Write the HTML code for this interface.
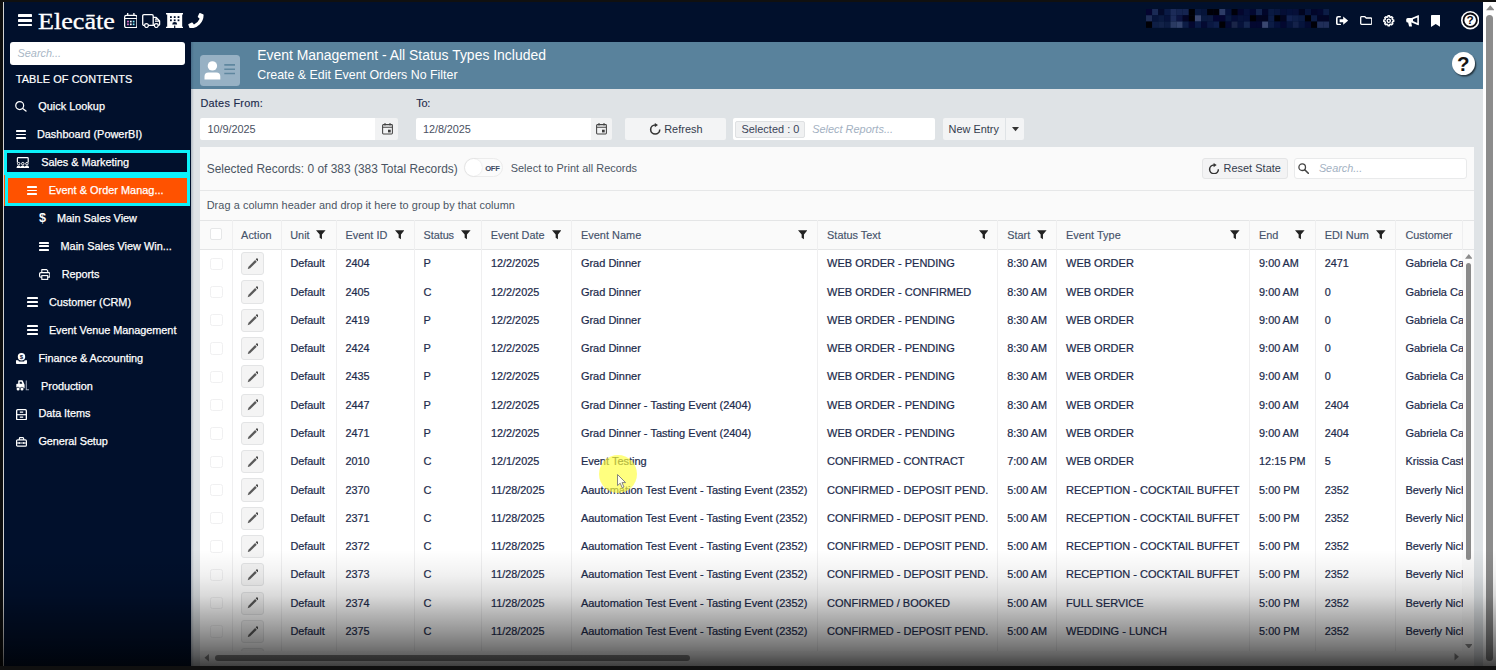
<!DOCTYPE html>
<html lang="en"><head><meta charset="utf-8"><title>Elecate - Event Management</title><style>
html,body{margin:0;padding:0;background:#0e0e0e;}
body{width:1496px;height:670px;overflow:hidden;position:relative;font-family:"Liberation Sans",sans-serif;}
.a{position:absolute;display:block;}
.t{white-space:nowrap;}
</style></head><body>
<div class="a " style="left:0.00px;top:0.00px;width:1496.00px;height:670.00px;background:#0e0e0e;"></div>
<div class="a " style="left:2.80px;top:1.80px;width:1481.20px;height:664.20px;background:#01102c;"></div>
<div class="a " style="left:2.80px;top:1.80px;width:1.30px;height:664.20px;background:#d4d4d4;"></div>
<div class="a " style="left:191.00px;top:42.40px;width:1293.00px;height:624.00px;background:#dfe3e6;"></div>
<div class="a " style="left:191.00px;top:42.40px;width:1293.00px;height:46.20px;background:#59829c;"></div>
<div class="a " style="left:191.00px;top:42.40px;width:3.00px;height:624.00px;background:linear-gradient(to right,rgba(20,40,70,.22),rgba(20,40,70,0));"></div>
<div class="a " style="left:1483.40px;top:2.00px;width:12.60px;height:664.00px;background:#ffffff;"></div>
<div class="a " style="left:1486.40px;top:15.00px;width:7.00px;height:646.00px;background:#8c8c8c;border-radius:3.5px;"></div>
<svg class="a" style="left:1485.60px;top:5.00px;" width="8.60" height="5.50" viewBox="0 0 10 6"><path d="M5 0L10 6H0z" fill="#8c8c8c"/></svg>
<div class="a " style="left:18.30px;top:14.30px;width:13.60px;height:2.30px;background:#fff;border-radius:0.4px;"></div>
<div class="a " style="left:18.30px;top:19.25px;width:13.60px;height:2.30px;background:#fff;border-radius:0.4px;"></div>
<div class="a " style="left:18.30px;top:24.20px;width:13.60px;height:2.30px;background:#fff;border-radius:0.4px;"></div>
<span class="a t" style="left:37.70px;top:8.20px;font-size:23.00px;line-height:28px;color:#fff;transform:scaleX(1.1365);transform-origin:0 50%;font-family:'Liberation Serif',serif;-webkit-text-stroke:0.3px #fff;">Elecāte</span>
<div class="a " style="left:10.00px;top:42.30px;width:175.00px;height:22.60px;background:#fff;border-radius:3px;"></div>
<span class="a t" style="left:17.50px;top:46.30px;font-size:10.90px;line-height:15px;color:#a9b7c6;font-style:italic;">Search...</span>
<span class="a t" style="left:15.80px;top:72.00px;font-size:10.90px;line-height:15px;color:#fff;letter-spacing:0.108px;-webkit-text-stroke:0.2px #fff;">TABLE OF CONTENTS</span>
<div class="a " style="left:4.20px;top:150.30px;width:186.20px;height:25.00px;border:3.2px solid #0cf2fa;box-sizing:border-box;"></div>
<div class="a " style="left:4.20px;top:175.30px;width:186.20px;height:30.40px;background:#ff5200;"></div>
<div class="a " style="left:5.30px;top:175.30px;width:185.10px;height:30.40px;border:3.2px solid #0cf2fa;box-sizing:border-box;"></div>
<span class="a t" style="left:38.30px;top:99.40px;font-size:10.90px;line-height:15px;color:#fff;letter-spacing:0.004px;-webkit-text-stroke:0.25px #fff;">Quick Lookup</span>
<span class="a t" style="left:36.90px;top:127.30px;font-size:10.90px;line-height:15px;color:#fff;letter-spacing:0.026px;-webkit-text-stroke:0.25px #fff;">Dashboard (PowerBI)</span>
<span class="a t" style="left:41.20px;top:155.20px;font-size:10.90px;line-height:15px;color:#fff;letter-spacing:-0.038px;-webkit-text-stroke:0.25px #fff;">Sales &amp; Marketing</span>
<span class="a t" style="left:48.70px;top:183.00px;font-size:10.90px;line-height:15px;color:#fff;letter-spacing:0.022px;-webkit-text-stroke:0.25px #fff;">Event &amp; Order Manag...</span>
<span class="a t" style="left:57.00px;top:210.80px;font-size:10.90px;line-height:15px;color:#fff;letter-spacing:-0.025px;-webkit-text-stroke:0.25px #fff;">Main Sales View</span>
<span class="a t" style="left:60.50px;top:238.80px;font-size:10.90px;line-height:15px;color:#fff;letter-spacing:0.006px;-webkit-text-stroke:0.25px #fff;">Main Sales View Win...</span>
<span class="a t" style="left:61.70px;top:266.70px;font-size:10.90px;line-height:15px;color:#fff;letter-spacing:-0.081px;-webkit-text-stroke:0.25px #fff;">Reports</span>
<span class="a t" style="left:48.90px;top:294.60px;font-size:10.90px;line-height:15px;color:#fff;letter-spacing:-0.011px;-webkit-text-stroke:0.25px #fff;">Customer (CRM)</span>
<span class="a t" style="left:48.90px;top:322.60px;font-size:10.90px;line-height:15px;color:#fff;letter-spacing:-0.040px;-webkit-text-stroke:0.25px #fff;">Event Venue Management</span>
<span class="a t" style="left:38.40px;top:350.50px;font-size:10.90px;line-height:15px;color:#fff;letter-spacing:-0.032px;-webkit-text-stroke:0.25px #fff;">Finance &amp; Accounting</span>
<span class="a t" style="left:41.10px;top:378.50px;font-size:10.90px;line-height:15px;color:#fff;letter-spacing:-0.051px;-webkit-text-stroke:0.25px #fff;">Production</span>
<span class="a t" style="left:38.40px;top:406.40px;font-size:10.90px;line-height:15px;color:#fff;letter-spacing:-0.070px;-webkit-text-stroke:0.25px #fff;">Data Items</span>
<span class="a t" style="left:38.40px;top:434.30px;font-size:10.90px;line-height:15px;color:#fff;letter-spacing:-0.061px;-webkit-text-stroke:0.25px #fff;">General Setup</span>
<div class="a " style="left:199.90px;top:54.60px;width:39.70px;height:31.50px;background:#97b1c4;border-radius:3.5px;"></div>
<span class="a t" style="left:257.20px;top:46.00px;font-size:13.95px;line-height:18px;color:#fff;letter-spacing:0.000px;">Event Management - All Status Types Included</span>
<span class="a t" style="left:257.20px;top:67.10px;font-size:12.40px;line-height:16px;color:#fff;letter-spacing:-0.001px;">Create &amp; Edit Event Orders No Filter</span>
<div class="a " style="left:1451.70px;top:52.40px;width:23.10px;height:23.10px;background:#fff;border-radius:50%;box-shadow:1.2px 1.6px 1.5px rgba(0,0,0,.6);"></div>
<span class="a t" style="left:1457.04px;top:52.20px;font-size:20.50px;line-height:24px;color:#141414;font-weight:700;">?</span>
<span class="a t" style="left:200.40px;top:95.80px;font-size:10.90px;line-height:15px;color:#1d2b4c;letter-spacing:0.258px;-webkit-text-stroke:0.15px #1d2b4c;">Dates From:</span>
<span class="a t" style="left:416.20px;top:95.80px;font-size:10.90px;line-height:15px;color:#1d2b4c;letter-spacing:-0.180px;-webkit-text-stroke:0.15px #1d2b4c;">To:</span>
<div class="a " style="left:200.40px;top:118.30px;width:174.50px;height:21.90px;background:#fff;border-radius:2px 0 0 2px;"></div>
<div class="a " style="left:374.90px;top:118.30px;width:23.10px;height:21.90px;background:#f1f2f3;border-radius:0 2px 2px 0;"></div>
<span class="a t" style="left:207.50px;top:121.90px;font-size:10.90px;line-height:15px;color:#4a5162;letter-spacing:-0.044px;">10/9/2025</span>
<div class="a " style="left:416.40px;top:118.30px;width:174.50px;height:21.90px;background:#fff;border-radius:2px 0 0 2px;"></div>
<div class="a " style="left:590.90px;top:118.30px;width:21.30px;height:21.90px;background:#f1f2f3;border-radius:0 2px 2px 0;"></div>
<span class="a t" style="left:423.00px;top:121.90px;font-size:10.90px;line-height:15px;color:#4a5162;letter-spacing:-0.088px;">12/8/2025</span>
<div class="a " style="left:625.30px;top:118.30px;width:101.00px;height:21.90px;background:#f3f4f5;border-radius:2px;"></div>
<span class="a t" style="left:664.20px;top:122.10px;font-size:10.90px;line-height:15px;color:#333c4d;letter-spacing:0.033px;">Refresh</span>
<div class="a " style="left:733.00px;top:118.30px;width:202.20px;height:21.90px;background:#fff;border-radius:2px;"></div>
<div class="a " style="left:735.40px;top:120.60px;width:69.50px;height:17.00px;background:#f0f1f2;border:1px solid #dfe1e3;box-sizing:border-box;border-radius:2px;"></div>
<span class="a t" style="left:741.40px;top:121.50px;font-size:10.90px;line-height:15px;color:#3a4458;letter-spacing:0.044px;">Selected : 0</span>
<span class="a t" style="left:812.20px;top:122.10px;font-size:10.90px;line-height:15px;color:#a3b1c2;letter-spacing:0.019px;font-style:italic;">Select Reports...</span>
<div class="a " style="left:942.90px;top:118.30px;width:81.60px;height:21.90px;background:#f3f4f5;border-radius:2px;"></div>
<div class="a " style="left:1005.20px;top:118.30px;width:0.80px;height:21.90px;background:#dfe3e6;"></div>
<span class="a t" style="left:948.60px;top:122.10px;font-size:10.90px;line-height:15px;color:#333c4d;letter-spacing:0.014px;">New Entry</span>
<svg class="a" style="left:1011.60px;top:127.20px;" width="7.00" height="4.40" viewBox="0 0 10 6"><path d="M0 0H10L5 6z" fill="#333"/></svg>
<div class="a " style="left:200.40px;top:146.70px;width:1273.90px;height:519.30px;background:#fafafa;"></div>
<span class="a t" style="left:206.70px;top:161.30px;font-size:11.90px;line-height:16px;color:#4a5563;letter-spacing:0.018px;">Selected Records: 0 of 383 (383 Total Records)</span>
<div class="a " style="left:464.20px;top:158.30px;width:39.10px;height:19.20px;background:#fbfbfb;border:1px solid #ececec;box-sizing:border-box;border-radius:10px;"></div>
<div class="a " style="left:465.20px;top:159.30px;width:17.20px;height:17.20px;background:#fff;border-radius:50%;box-shadow:0 0 2px rgba(0,0,0,.13);"></div>
<span class="a t" style="left:485.20px;top:163.60px;font-size:7.60px;line-height:10px;color:#3c4a63;letter-spacing:-0.232px;font-weight:700;">OFF</span>
<span class="a t" style="left:510.70px;top:160.90px;font-size:10.90px;line-height:15px;color:#4a5563;letter-spacing:0.041px;">Select to Print all Records</span>
<div class="a " style="left:1201.50px;top:157.70px;width:86.10px;height:21.70px;background:#f3f3f4;border:1px solid #e4e5e6;box-sizing:border-box;border-radius:3px;"></div>
<span class="a t" style="left:1223.50px;top:161.10px;font-size:10.90px;line-height:15px;color:#333c4d;letter-spacing:0.050px;">Reset State</span>
<div class="a " style="left:1293.60px;top:157.70px;width:173.80px;height:21.70px;background:#fff;border:1px solid #e9eaeb;box-sizing:border-box;border-radius:3px;"></div>
<span class="a t" style="left:1318.90px;top:161.10px;font-size:10.90px;line-height:15px;color:#a3b1c2;letter-spacing:-0.036px;font-style:italic;">Search...</span>
<div class="a " style="left:200.40px;top:190.00px;width:1273.90px;height:1.00px;background:#e6e7e8;"></div>
<span class="a t" style="left:206.70px;top:197.90px;font-size:10.90px;line-height:15px;color:#4a5563;letter-spacing:0.071px;">Drag a column header and drop it here to group by that column</span>
<div class="a " style="left:200.40px;top:220.00px;width:1273.90px;height:1.00px;background:#e4e5e6;"></div>
<div class="a " style="left:200.40px;top:221.00px;width:1273.90px;height:28.20px;background:#fafafa;"></div>
<div class="a " style="left:200.40px;top:249.00px;width:1273.90px;height:1.00px;background:#e4e5e6;"></div>
<div class="a " style="left:200.40px;top:250.00px;width:1262.00px;height:416.00px;background:#fff;"></div>
<div class="a " style="left:231.60px;top:220.00px;width:1.00px;height:431.00px;background:#efeff0;"></div>
<div class="a " style="left:281.10px;top:220.00px;width:1.00px;height:431.00px;background:#efeff0;"></div>
<div class="a " style="left:335.90px;top:220.00px;width:1.00px;height:431.00px;background:#efeff0;"></div>
<div class="a " style="left:414.10px;top:220.00px;width:1.00px;height:431.00px;background:#efeff0;"></div>
<div class="a " style="left:480.70px;top:220.00px;width:1.00px;height:431.00px;background:#efeff0;"></div>
<div class="a " style="left:570.90px;top:220.00px;width:1.00px;height:431.00px;background:#efeff0;"></div>
<div class="a " style="left:817.00px;top:220.00px;width:1.00px;height:431.00px;background:#efeff0;"></div>
<div class="a " style="left:996.70px;top:220.00px;width:1.00px;height:431.00px;background:#efeff0;"></div>
<div class="a " style="left:1055.90px;top:220.00px;width:1.00px;height:431.00px;background:#efeff0;"></div>
<div class="a " style="left:1249.40px;top:220.00px;width:1.00px;height:431.00px;background:#efeff0;"></div>
<div class="a " style="left:1315.30px;top:220.00px;width:1.00px;height:431.00px;background:#efeff0;"></div>
<div class="a " style="left:1395.10px;top:220.00px;width:1.00px;height:431.00px;background:#efeff0;"></div>
<div class="a " style="left:1461.90px;top:220.00px;width:1.00px;height:29.50px;background:#efeff0;"></div>
<span class="a t" style="left:241.10px;top:227.70px;font-size:10.90px;line-height:15px;color:#46536b;letter-spacing:0.034px;-webkit-text-stroke:0.15px #46536b;">Action</span>
<span class="a t" style="left:290.20px;top:227.70px;font-size:10.90px;line-height:15px;color:#46536b;letter-spacing:0.029px;-webkit-text-stroke:0.15px #46536b;">Unit</span>
<svg class="a" style="left:316.30px;top:230.40px;" width="9.60" height="9.90" viewBox="0 0 10 10"><path d="M0 0H10L6.2 4.6V9.6L3.8 8V4.6z" fill="#222"/></svg>
<span class="a t" style="left:345.40px;top:227.70px;font-size:10.90px;line-height:15px;color:#46536b;letter-spacing:0.037px;-webkit-text-stroke:0.15px #46536b;">Event ID</span>
<svg class="a" style="left:394.50px;top:230.40px;" width="9.60" height="9.90" viewBox="0 0 10 10"><path d="M0 0H10L6.2 4.6V9.6L3.8 8V4.6z" fill="#222"/></svg>
<span class="a t" style="left:423.60px;top:227.70px;font-size:10.90px;line-height:15px;color:#46536b;letter-spacing:-0.084px;-webkit-text-stroke:0.15px #46536b;">Status</span>
<svg class="a" style="left:461.00px;top:230.40px;" width="9.60" height="9.90" viewBox="0 0 10 10"><path d="M0 0H10L6.2 4.6V9.6L3.8 8V4.6z" fill="#222"/></svg>
<span class="a t" style="left:490.70px;top:227.70px;font-size:10.90px;line-height:15px;color:#46536b;letter-spacing:-0.003px;-webkit-text-stroke:0.15px #46536b;">Event Date</span>
<svg class="a" style="left:551.80px;top:230.40px;" width="9.60" height="9.90" viewBox="0 0 10 10"><path d="M0 0H10L6.2 4.6V9.6L3.8 8V4.6z" fill="#222"/></svg>
<span class="a t" style="left:580.90px;top:227.70px;font-size:10.90px;line-height:15px;color:#46536b;letter-spacing:0.052px;-webkit-text-stroke:0.15px #46536b;">Event Name</span>
<svg class="a" style="left:797.70px;top:230.40px;" width="9.60" height="9.90" viewBox="0 0 10 10"><path d="M0 0H10L6.2 4.6V9.6L3.8 8V4.6z" fill="#222"/></svg>
<span class="a t" style="left:827.10px;top:227.70px;font-size:10.90px;line-height:15px;color:#46536b;letter-spacing:0.007px;-webkit-text-stroke:0.15px #46536b;">Status Text</span>
<svg class="a" style="left:978.50px;top:230.40px;" width="9.60" height="9.90" viewBox="0 0 10 10"><path d="M0 0H10L6.2 4.6V9.6L3.8 8V4.6z" fill="#222"/></svg>
<span class="a t" style="left:1007.20px;top:227.70px;font-size:10.90px;line-height:15px;color:#46536b;letter-spacing:0.016px;-webkit-text-stroke:0.15px #46536b;">Start</span>
<svg class="a" style="left:1037.30px;top:230.40px;" width="9.60" height="9.90" viewBox="0 0 10 10"><path d="M0 0H10L6.2 4.6V9.6L3.8 8V4.6z" fill="#222"/></svg>
<span class="a t" style="left:1066.00px;top:227.70px;font-size:10.90px;line-height:15px;color:#46536b;letter-spacing:0.046px;-webkit-text-stroke:0.15px #46536b;">Event Type</span>
<svg class="a" style="left:1230.00px;top:230.40px;" width="9.60" height="9.90" viewBox="0 0 10 10"><path d="M0 0H10L6.2 4.6V9.6L3.8 8V4.6z" fill="#222"/></svg>
<span class="a t" style="left:1259.10px;top:227.70px;font-size:10.90px;line-height:15px;color:#46536b;letter-spacing:-0.098px;-webkit-text-stroke:0.15px #46536b;">End</span>
<svg class="a" style="left:1295.20px;top:230.40px;" width="9.60" height="9.90" viewBox="0 0 10 10"><path d="M0 0H10L6.2 4.6V9.6L3.8 8V4.6z" fill="#222"/></svg>
<span class="a t" style="left:1324.70px;top:227.70px;font-size:10.90px;line-height:15px;color:#46536b;letter-spacing:-0.002px;-webkit-text-stroke:0.15px #46536b;">EDI Num</span>
<svg class="a" style="left:1376.20px;top:230.40px;" width="9.60" height="9.90" viewBox="0 0 10 10"><path d="M0 0H10L6.2 4.6V9.6L3.8 8V4.6z" fill="#222"/></svg>
<span class="a t" style="left:1405.40px;top:227.70px;font-size:10.90px;line-height:15px;color:#46536b;letter-spacing:-0.031px;-webkit-text-stroke:0.15px #46536b;">Customer</span>
<div class="a " style="left:210.40px;top:228.40px;width:12.00px;height:12.00px;background:#fff;border:1px solid #e6e7e8;box-sizing:border-box;border-radius:2px;"></div>
<div class="a " style="left:210.20px;top:257.50px;width:12.40px;height:12.40px;background:#fff;border:1px solid #f0f0f1;box-sizing:border-box;border-radius:2.5px;"></div>
<div class="a " style="left:241.10px;top:252.20px;width:23.10px;height:23.10px;background:#f4f4f4;border:1px solid #e3e4e5;box-sizing:border-box;border-radius:3px;"></div>
<svg class="a" style="left:246.90px;top:257.80px;" width="11.60" height="11.60" viewBox="0 0 10 10"><path d="M0.600 9.600L1.300 7.500L7 1.800L8.400 3.200L2.700 8.900z" fill="#5a5a5a"/><path d="M7.500 1L8.100 0.400a0.700 0.700 0 0 1 1 0L9.800 1.100a0.700 0.700 0 0 1 0 1L9.200 2.700z" fill="#444"/></svg>
<span class="a t" style="left:290.40px;top:256.30px;font-size:10.90px;line-height:15px;color:#1d2b4c;letter-spacing:-0.020px;-webkit-text-stroke:0.22px #1d2b4c;">Default</span>
<span class="a t" style="left:345.40px;top:256.30px;font-size:10.85px;line-height:15px;color:#1d2b4c;-webkit-text-stroke:0.22px #1d2b4c;">2404</span>
<span class="a t" style="left:423.60px;top:256.30px;font-size:11.00px;line-height:15px;color:#1d2b4c;-webkit-text-stroke:0.22px #1d2b4c;">P</span>
<span class="a t" style="left:491.00px;top:256.30px;font-size:10.85px;line-height:15px;color:#1d2b4c;-webkit-text-stroke:0.22px #1d2b4c;">12/2/2025</span>
<span class="a t" style="left:580.90px;top:256.30px;font-size:11.00px;line-height:15px;color:#1d2b4c;-webkit-text-stroke:0.22px #1d2b4c;">Grad Dinner</span>
<span class="a t" style="left:827.10px;top:256.30px;font-size:11.00px;line-height:15px;color:#1d2b4c;-webkit-text-stroke:0.22px #1d2b4c;">WEB ORDER - PENDING</span>
<span class="a t" style="left:1007.20px;top:256.30px;font-size:10.85px;line-height:15px;color:#1d2b4c;-webkit-text-stroke:0.22px #1d2b4c;">8:30 AM</span>
<span class="a t" style="left:1066.00px;top:256.30px;font-size:11.00px;line-height:15px;color:#1d2b4c;-webkit-text-stroke:0.22px #1d2b4c;">WEB ORDER</span>
<span class="a t" style="left:1259.10px;top:256.30px;font-size:10.85px;line-height:15px;color:#1d2b4c;-webkit-text-stroke:0.22px #1d2b4c;">9:00 AM</span>
<span class="a t" style="left:1324.70px;top:256.30px;font-size:10.85px;line-height:15px;color:#1d2b4c;-webkit-text-stroke:0.22px #1d2b4c;">2471</span>
<span class="a t" style="left:1405.40px;top:256.30px;font-size:11.00px;line-height:15px;color:#1d2b4c;width:57.20px;overflow:hidden;-webkit-text-stroke:0.22px #1d2b4c;">Gabriela Cas</span>
<div class="a " style="left:210.20px;top:285.79px;width:12.40px;height:12.40px;background:#fff;border:1px solid #f0f0f1;box-sizing:border-box;border-radius:2.5px;"></div>
<div class="a " style="left:241.10px;top:280.49px;width:23.10px;height:23.10px;background:#f4f4f4;border:1px solid #e3e4e5;box-sizing:border-box;border-radius:3px;"></div>
<svg class="a" style="left:246.90px;top:286.09px;" width="11.60" height="11.60" viewBox="0 0 10 10"><path d="M0.600 9.600L1.300 7.500L7 1.800L8.400 3.200L2.700 8.900z" fill="#5a5a5a"/><path d="M7.500 1L8.100 0.400a0.700 0.700 0 0 1 1 0L9.800 1.100a0.700 0.700 0 0 1 0 1L9.200 2.700z" fill="#444"/></svg>
<span class="a t" style="left:290.40px;top:284.59px;font-size:10.90px;line-height:15px;color:#1d2b4c;letter-spacing:-0.020px;-webkit-text-stroke:0.22px #1d2b4c;">Default</span>
<span class="a t" style="left:345.40px;top:284.59px;font-size:10.85px;line-height:15px;color:#1d2b4c;-webkit-text-stroke:0.22px #1d2b4c;">2405</span>
<span class="a t" style="left:423.60px;top:284.59px;font-size:11.00px;line-height:15px;color:#1d2b4c;-webkit-text-stroke:0.22px #1d2b4c;">C</span>
<span class="a t" style="left:491.00px;top:284.59px;font-size:10.85px;line-height:15px;color:#1d2b4c;-webkit-text-stroke:0.22px #1d2b4c;">12/2/2025</span>
<span class="a t" style="left:580.90px;top:284.59px;font-size:11.00px;line-height:15px;color:#1d2b4c;-webkit-text-stroke:0.22px #1d2b4c;">Grad Dinner</span>
<span class="a t" style="left:827.10px;top:284.59px;font-size:11.00px;line-height:15px;color:#1d2b4c;-webkit-text-stroke:0.22px #1d2b4c;">WEB ORDER - CONFIRMED</span>
<span class="a t" style="left:1007.20px;top:284.59px;font-size:10.85px;line-height:15px;color:#1d2b4c;-webkit-text-stroke:0.22px #1d2b4c;">8:30 AM</span>
<span class="a t" style="left:1066.00px;top:284.59px;font-size:11.00px;line-height:15px;color:#1d2b4c;-webkit-text-stroke:0.22px #1d2b4c;">WEB ORDER</span>
<span class="a t" style="left:1259.10px;top:284.59px;font-size:10.85px;line-height:15px;color:#1d2b4c;-webkit-text-stroke:0.22px #1d2b4c;">9:00 AM</span>
<span class="a t" style="left:1324.70px;top:284.59px;font-size:10.85px;line-height:15px;color:#1d2b4c;-webkit-text-stroke:0.22px #1d2b4c;">0</span>
<span class="a t" style="left:1405.40px;top:284.59px;font-size:11.00px;line-height:15px;color:#1d2b4c;width:57.20px;overflow:hidden;-webkit-text-stroke:0.22px #1d2b4c;">Gabriela Cas</span>
<div class="a " style="left:210.20px;top:314.07px;width:12.40px;height:12.40px;background:#fff;border:1px solid #f0f0f1;box-sizing:border-box;border-radius:2.5px;"></div>
<div class="a " style="left:241.10px;top:308.77px;width:23.10px;height:23.10px;background:#f4f4f4;border:1px solid #e3e4e5;box-sizing:border-box;border-radius:3px;"></div>
<svg class="a" style="left:246.90px;top:314.37px;" width="11.60" height="11.60" viewBox="0 0 10 10"><path d="M0.600 9.600L1.300 7.500L7 1.800L8.400 3.200L2.700 8.900z" fill="#5a5a5a"/><path d="M7.500 1L8.100 0.400a0.700 0.700 0 0 1 1 0L9.800 1.100a0.700 0.700 0 0 1 0 1L9.200 2.700z" fill="#444"/></svg>
<span class="a t" style="left:290.40px;top:312.87px;font-size:10.90px;line-height:15px;color:#1d2b4c;letter-spacing:-0.020px;-webkit-text-stroke:0.22px #1d2b4c;">Default</span>
<span class="a t" style="left:345.40px;top:312.87px;font-size:10.85px;line-height:15px;color:#1d2b4c;-webkit-text-stroke:0.22px #1d2b4c;">2419</span>
<span class="a t" style="left:423.60px;top:312.87px;font-size:11.00px;line-height:15px;color:#1d2b4c;-webkit-text-stroke:0.22px #1d2b4c;">P</span>
<span class="a t" style="left:491.00px;top:312.87px;font-size:10.85px;line-height:15px;color:#1d2b4c;-webkit-text-stroke:0.22px #1d2b4c;">12/2/2025</span>
<span class="a t" style="left:580.90px;top:312.87px;font-size:11.00px;line-height:15px;color:#1d2b4c;-webkit-text-stroke:0.22px #1d2b4c;">Grad Dinner</span>
<span class="a t" style="left:827.10px;top:312.87px;font-size:11.00px;line-height:15px;color:#1d2b4c;-webkit-text-stroke:0.22px #1d2b4c;">WEB ORDER - PENDING</span>
<span class="a t" style="left:1007.20px;top:312.87px;font-size:10.85px;line-height:15px;color:#1d2b4c;-webkit-text-stroke:0.22px #1d2b4c;">8:30 AM</span>
<span class="a t" style="left:1066.00px;top:312.87px;font-size:11.00px;line-height:15px;color:#1d2b4c;-webkit-text-stroke:0.22px #1d2b4c;">WEB ORDER</span>
<span class="a t" style="left:1259.10px;top:312.87px;font-size:10.85px;line-height:15px;color:#1d2b4c;-webkit-text-stroke:0.22px #1d2b4c;">9:00 AM</span>
<span class="a t" style="left:1324.70px;top:312.87px;font-size:10.85px;line-height:15px;color:#1d2b4c;-webkit-text-stroke:0.22px #1d2b4c;">0</span>
<span class="a t" style="left:1405.40px;top:312.87px;font-size:11.00px;line-height:15px;color:#1d2b4c;width:57.20px;overflow:hidden;-webkit-text-stroke:0.22px #1d2b4c;">Gabriela Cas</span>
<div class="a " style="left:210.20px;top:342.36px;width:12.40px;height:12.40px;background:#fff;border:1px solid #f0f0f1;box-sizing:border-box;border-radius:2.5px;"></div>
<div class="a " style="left:241.10px;top:337.06px;width:23.10px;height:23.10px;background:#f4f4f4;border:1px solid #e3e4e5;box-sizing:border-box;border-radius:3px;"></div>
<svg class="a" style="left:246.90px;top:342.66px;" width="11.60" height="11.60" viewBox="0 0 10 10"><path d="M0.600 9.600L1.300 7.500L7 1.800L8.400 3.200L2.700 8.900z" fill="#5a5a5a"/><path d="M7.500 1L8.100 0.400a0.700 0.700 0 0 1 1 0L9.800 1.100a0.700 0.700 0 0 1 0 1L9.200 2.700z" fill="#444"/></svg>
<span class="a t" style="left:290.40px;top:341.16px;font-size:10.90px;line-height:15px;color:#1d2b4c;letter-spacing:-0.020px;-webkit-text-stroke:0.22px #1d2b4c;">Default</span>
<span class="a t" style="left:345.40px;top:341.16px;font-size:10.85px;line-height:15px;color:#1d2b4c;-webkit-text-stroke:0.22px #1d2b4c;">2424</span>
<span class="a t" style="left:423.60px;top:341.16px;font-size:11.00px;line-height:15px;color:#1d2b4c;-webkit-text-stroke:0.22px #1d2b4c;">P</span>
<span class="a t" style="left:491.00px;top:341.16px;font-size:10.85px;line-height:15px;color:#1d2b4c;-webkit-text-stroke:0.22px #1d2b4c;">12/2/2025</span>
<span class="a t" style="left:580.90px;top:341.16px;font-size:11.00px;line-height:15px;color:#1d2b4c;-webkit-text-stroke:0.22px #1d2b4c;">Grad Dinner</span>
<span class="a t" style="left:827.10px;top:341.16px;font-size:11.00px;line-height:15px;color:#1d2b4c;-webkit-text-stroke:0.22px #1d2b4c;">WEB ORDER - PENDING</span>
<span class="a t" style="left:1007.20px;top:341.16px;font-size:10.85px;line-height:15px;color:#1d2b4c;-webkit-text-stroke:0.22px #1d2b4c;">8:30 AM</span>
<span class="a t" style="left:1066.00px;top:341.16px;font-size:11.00px;line-height:15px;color:#1d2b4c;-webkit-text-stroke:0.22px #1d2b4c;">WEB ORDER</span>
<span class="a t" style="left:1259.10px;top:341.16px;font-size:10.85px;line-height:15px;color:#1d2b4c;-webkit-text-stroke:0.22px #1d2b4c;">9:00 AM</span>
<span class="a t" style="left:1324.70px;top:341.16px;font-size:10.85px;line-height:15px;color:#1d2b4c;-webkit-text-stroke:0.22px #1d2b4c;">0</span>
<span class="a t" style="left:1405.40px;top:341.16px;font-size:11.00px;line-height:15px;color:#1d2b4c;width:57.20px;overflow:hidden;-webkit-text-stroke:0.22px #1d2b4c;">Gabriela Cas</span>
<div class="a " style="left:210.20px;top:370.64px;width:12.40px;height:12.40px;background:#fff;border:1px solid #f0f0f1;box-sizing:border-box;border-radius:2.5px;"></div>
<div class="a " style="left:241.10px;top:365.34px;width:23.10px;height:23.10px;background:#f4f4f4;border:1px solid #e3e4e5;box-sizing:border-box;border-radius:3px;"></div>
<svg class="a" style="left:246.90px;top:370.94px;" width="11.60" height="11.60" viewBox="0 0 10 10"><path d="M0.600 9.600L1.300 7.500L7 1.800L8.400 3.200L2.700 8.900z" fill="#5a5a5a"/><path d="M7.500 1L8.100 0.400a0.700 0.700 0 0 1 1 0L9.800 1.100a0.700 0.700 0 0 1 0 1L9.200 2.700z" fill="#444"/></svg>
<span class="a t" style="left:290.40px;top:369.44px;font-size:10.90px;line-height:15px;color:#1d2b4c;letter-spacing:-0.020px;-webkit-text-stroke:0.22px #1d2b4c;">Default</span>
<span class="a t" style="left:345.40px;top:369.44px;font-size:10.85px;line-height:15px;color:#1d2b4c;-webkit-text-stroke:0.22px #1d2b4c;">2435</span>
<span class="a t" style="left:423.60px;top:369.44px;font-size:11.00px;line-height:15px;color:#1d2b4c;-webkit-text-stroke:0.22px #1d2b4c;">P</span>
<span class="a t" style="left:491.00px;top:369.44px;font-size:10.85px;line-height:15px;color:#1d2b4c;-webkit-text-stroke:0.22px #1d2b4c;">12/2/2025</span>
<span class="a t" style="left:580.90px;top:369.44px;font-size:11.00px;line-height:15px;color:#1d2b4c;-webkit-text-stroke:0.22px #1d2b4c;">Grad Dinner</span>
<span class="a t" style="left:827.10px;top:369.44px;font-size:11.00px;line-height:15px;color:#1d2b4c;-webkit-text-stroke:0.22px #1d2b4c;">WEB ORDER - PENDING</span>
<span class="a t" style="left:1007.20px;top:369.44px;font-size:10.85px;line-height:15px;color:#1d2b4c;-webkit-text-stroke:0.22px #1d2b4c;">8:30 AM</span>
<span class="a t" style="left:1066.00px;top:369.44px;font-size:11.00px;line-height:15px;color:#1d2b4c;-webkit-text-stroke:0.22px #1d2b4c;">WEB ORDER</span>
<span class="a t" style="left:1259.10px;top:369.44px;font-size:10.85px;line-height:15px;color:#1d2b4c;-webkit-text-stroke:0.22px #1d2b4c;">9:00 AM</span>
<span class="a t" style="left:1324.70px;top:369.44px;font-size:10.85px;line-height:15px;color:#1d2b4c;-webkit-text-stroke:0.22px #1d2b4c;">0</span>
<span class="a t" style="left:1405.40px;top:369.44px;font-size:11.00px;line-height:15px;color:#1d2b4c;width:57.20px;overflow:hidden;-webkit-text-stroke:0.22px #1d2b4c;">Gabriela Cas</span>
<div class="a " style="left:210.20px;top:398.93px;width:12.40px;height:12.40px;background:#fff;border:1px solid #f0f0f1;box-sizing:border-box;border-radius:2.5px;"></div>
<div class="a " style="left:241.10px;top:393.62px;width:23.10px;height:23.10px;background:#f4f4f4;border:1px solid #e3e4e5;box-sizing:border-box;border-radius:3px;"></div>
<svg class="a" style="left:246.90px;top:399.23px;" width="11.60" height="11.60" viewBox="0 0 10 10"><path d="M0.600 9.600L1.300 7.500L7 1.800L8.400 3.200L2.700 8.900z" fill="#5a5a5a"/><path d="M7.500 1L8.100 0.400a0.700 0.700 0 0 1 1 0L9.800 1.100a0.700 0.700 0 0 1 0 1L9.200 2.700z" fill="#444"/></svg>
<span class="a t" style="left:290.40px;top:397.73px;font-size:10.90px;line-height:15px;color:#1d2b4c;letter-spacing:-0.020px;-webkit-text-stroke:0.22px #1d2b4c;">Default</span>
<span class="a t" style="left:345.40px;top:397.73px;font-size:10.85px;line-height:15px;color:#1d2b4c;-webkit-text-stroke:0.22px #1d2b4c;">2447</span>
<span class="a t" style="left:423.60px;top:397.73px;font-size:11.00px;line-height:15px;color:#1d2b4c;-webkit-text-stroke:0.22px #1d2b4c;">P</span>
<span class="a t" style="left:491.00px;top:397.73px;font-size:10.85px;line-height:15px;color:#1d2b4c;-webkit-text-stroke:0.22px #1d2b4c;">12/2/2025</span>
<span class="a t" style="left:580.90px;top:397.73px;font-size:11.00px;line-height:15px;color:#1d2b4c;-webkit-text-stroke:0.22px #1d2b4c;">Grad Dinner - Tasting Event (2404)</span>
<span class="a t" style="left:827.10px;top:397.73px;font-size:11.00px;line-height:15px;color:#1d2b4c;-webkit-text-stroke:0.22px #1d2b4c;">WEB ORDER - PENDING</span>
<span class="a t" style="left:1007.20px;top:397.73px;font-size:10.85px;line-height:15px;color:#1d2b4c;-webkit-text-stroke:0.22px #1d2b4c;">8:30 AM</span>
<span class="a t" style="left:1066.00px;top:397.73px;font-size:11.00px;line-height:15px;color:#1d2b4c;-webkit-text-stroke:0.22px #1d2b4c;">WEB ORDER</span>
<span class="a t" style="left:1259.10px;top:397.73px;font-size:10.85px;line-height:15px;color:#1d2b4c;-webkit-text-stroke:0.22px #1d2b4c;">9:00 AM</span>
<span class="a t" style="left:1324.70px;top:397.73px;font-size:10.85px;line-height:15px;color:#1d2b4c;-webkit-text-stroke:0.22px #1d2b4c;">2404</span>
<span class="a t" style="left:1405.40px;top:397.73px;font-size:11.00px;line-height:15px;color:#1d2b4c;width:57.20px;overflow:hidden;-webkit-text-stroke:0.22px #1d2b4c;">Gabriela Cas</span>
<div class="a " style="left:210.20px;top:427.21px;width:12.40px;height:12.40px;background:#fff;border:1px solid #f0f0f1;box-sizing:border-box;border-radius:2.5px;"></div>
<div class="a " style="left:241.10px;top:421.91px;width:23.10px;height:23.10px;background:#f4f4f4;border:1px solid #e3e4e5;box-sizing:border-box;border-radius:3px;"></div>
<svg class="a" style="left:246.90px;top:427.51px;" width="11.60" height="11.60" viewBox="0 0 10 10"><path d="M0.600 9.600L1.300 7.500L7 1.800L8.400 3.200L2.700 8.900z" fill="#5a5a5a"/><path d="M7.500 1L8.100 0.400a0.700 0.700 0 0 1 1 0L9.800 1.100a0.700 0.700 0 0 1 0 1L9.200 2.700z" fill="#444"/></svg>
<span class="a t" style="left:290.40px;top:426.01px;font-size:10.90px;line-height:15px;color:#1d2b4c;letter-spacing:-0.020px;-webkit-text-stroke:0.22px #1d2b4c;">Default</span>
<span class="a t" style="left:345.40px;top:426.01px;font-size:10.85px;line-height:15px;color:#1d2b4c;-webkit-text-stroke:0.22px #1d2b4c;">2471</span>
<span class="a t" style="left:423.60px;top:426.01px;font-size:11.00px;line-height:15px;color:#1d2b4c;-webkit-text-stroke:0.22px #1d2b4c;">P</span>
<span class="a t" style="left:491.00px;top:426.01px;font-size:10.85px;line-height:15px;color:#1d2b4c;-webkit-text-stroke:0.22px #1d2b4c;">12/2/2025</span>
<span class="a t" style="left:580.90px;top:426.01px;font-size:11.00px;line-height:15px;color:#1d2b4c;-webkit-text-stroke:0.22px #1d2b4c;">Grad Dinner - Tasting Event (2404)</span>
<span class="a t" style="left:827.10px;top:426.01px;font-size:11.00px;line-height:15px;color:#1d2b4c;-webkit-text-stroke:0.22px #1d2b4c;">WEB ORDER - PENDING</span>
<span class="a t" style="left:1007.20px;top:426.01px;font-size:10.85px;line-height:15px;color:#1d2b4c;-webkit-text-stroke:0.22px #1d2b4c;">8:30 AM</span>
<span class="a t" style="left:1066.00px;top:426.01px;font-size:11.00px;line-height:15px;color:#1d2b4c;-webkit-text-stroke:0.22px #1d2b4c;">WEB ORDER</span>
<span class="a t" style="left:1259.10px;top:426.01px;font-size:10.85px;line-height:15px;color:#1d2b4c;-webkit-text-stroke:0.22px #1d2b4c;">9:00 AM</span>
<span class="a t" style="left:1324.70px;top:426.01px;font-size:10.85px;line-height:15px;color:#1d2b4c;-webkit-text-stroke:0.22px #1d2b4c;">2404</span>
<span class="a t" style="left:1405.40px;top:426.01px;font-size:11.00px;line-height:15px;color:#1d2b4c;width:57.20px;overflow:hidden;-webkit-text-stroke:0.22px #1d2b4c;">Gabriela Cas</span>
<div class="a " style="left:210.20px;top:455.50px;width:12.40px;height:12.40px;background:#fff;border:1px solid #f0f0f1;box-sizing:border-box;border-radius:2.5px;"></div>
<div class="a " style="left:241.10px;top:450.19px;width:23.10px;height:23.10px;background:#f4f4f4;border:1px solid #e3e4e5;box-sizing:border-box;border-radius:3px;"></div>
<svg class="a" style="left:246.90px;top:455.80px;" width="11.60" height="11.60" viewBox="0 0 10 10"><path d="M0.600 9.600L1.300 7.500L7 1.800L8.400 3.200L2.700 8.900z" fill="#5a5a5a"/><path d="M7.500 1L8.100 0.400a0.700 0.700 0 0 1 1 0L9.800 1.100a0.700 0.700 0 0 1 0 1L9.200 2.700z" fill="#444"/></svg>
<span class="a t" style="left:290.40px;top:454.30px;font-size:10.90px;line-height:15px;color:#1d2b4c;letter-spacing:-0.020px;-webkit-text-stroke:0.22px #1d2b4c;">Default</span>
<span class="a t" style="left:345.40px;top:454.30px;font-size:10.85px;line-height:15px;color:#1d2b4c;-webkit-text-stroke:0.22px #1d2b4c;">2010</span>
<span class="a t" style="left:423.60px;top:454.30px;font-size:11.00px;line-height:15px;color:#1d2b4c;-webkit-text-stroke:0.22px #1d2b4c;">C</span>
<span class="a t" style="left:491.00px;top:454.30px;font-size:10.85px;line-height:15px;color:#1d2b4c;-webkit-text-stroke:0.22px #1d2b4c;">12/1/2025</span>
<span class="a t" style="left:580.90px;top:454.30px;font-size:11.00px;line-height:15px;color:#1d2b4c;-webkit-text-stroke:0.22px #1d2b4c;">Event Testing</span>
<span class="a t" style="left:827.10px;top:454.30px;font-size:11.00px;line-height:15px;color:#1d2b4c;-webkit-text-stroke:0.22px #1d2b4c;">CONFIRMED - CONTRACT</span>
<span class="a t" style="left:1007.20px;top:454.30px;font-size:10.85px;line-height:15px;color:#1d2b4c;-webkit-text-stroke:0.22px #1d2b4c;">7:00 AM</span>
<span class="a t" style="left:1066.00px;top:454.30px;font-size:11.00px;line-height:15px;color:#1d2b4c;-webkit-text-stroke:0.22px #1d2b4c;">WEB ORDER</span>
<span class="a t" style="left:1259.10px;top:454.30px;font-size:10.85px;line-height:15px;color:#1d2b4c;-webkit-text-stroke:0.22px #1d2b4c;">12:15 PM</span>
<span class="a t" style="left:1324.70px;top:454.30px;font-size:10.85px;line-height:15px;color:#1d2b4c;-webkit-text-stroke:0.22px #1d2b4c;">5</span>
<span class="a t" style="left:1405.40px;top:454.30px;font-size:11.00px;line-height:15px;color:#1d2b4c;width:57.20px;overflow:hidden;-webkit-text-stroke:0.22px #1d2b4c;">Krissia Cast</span>
<div class="a " style="left:210.20px;top:483.78px;width:12.40px;height:12.40px;background:#fff;border:1px solid #f0f0f1;box-sizing:border-box;border-radius:2.5px;"></div>
<div class="a " style="left:241.10px;top:478.48px;width:23.10px;height:23.10px;background:#f4f4f4;border:1px solid #e3e4e5;box-sizing:border-box;border-radius:3px;"></div>
<svg class="a" style="left:246.90px;top:484.08px;" width="11.60" height="11.60" viewBox="0 0 10 10"><path d="M0.600 9.600L1.300 7.500L7 1.800L8.400 3.200L2.700 8.900z" fill="#5a5a5a"/><path d="M7.500 1L8.100 0.400a0.700 0.700 0 0 1 1 0L9.800 1.100a0.700 0.700 0 0 1 0 1L9.200 2.700z" fill="#444"/></svg>
<span class="a t" style="left:290.40px;top:482.58px;font-size:10.90px;line-height:15px;color:#1d2b4c;letter-spacing:-0.020px;-webkit-text-stroke:0.22px #1d2b4c;">Default</span>
<span class="a t" style="left:345.40px;top:482.58px;font-size:10.85px;line-height:15px;color:#1d2b4c;-webkit-text-stroke:0.22px #1d2b4c;">2370</span>
<span class="a t" style="left:423.60px;top:482.58px;font-size:11.00px;line-height:15px;color:#1d2b4c;-webkit-text-stroke:0.22px #1d2b4c;">C</span>
<span class="a t" style="left:491.00px;top:482.58px;font-size:10.85px;line-height:15px;color:#1d2b4c;-webkit-text-stroke:0.22px #1d2b4c;">11/28/2025</span>
<span class="a t" style="left:580.90px;top:482.58px;font-size:11.00px;line-height:15px;color:#1d2b4c;-webkit-text-stroke:0.22px #1d2b4c;">Aautomation Test Event - Tasting Event (2352)</span>
<span class="a t" style="left:827.10px;top:482.58px;font-size:11.00px;line-height:15px;color:#1d2b4c;-webkit-text-stroke:0.22px #1d2b4c;">CONFIRMED - DEPOSIT PEND.</span>
<span class="a t" style="left:1007.20px;top:482.58px;font-size:10.85px;line-height:15px;color:#1d2b4c;-webkit-text-stroke:0.22px #1d2b4c;">5:00 AM</span>
<span class="a t" style="left:1066.00px;top:482.58px;font-size:11.00px;line-height:15px;color:#1d2b4c;-webkit-text-stroke:0.22px #1d2b4c;">RECEPTION - COCKTAIL BUFFET</span>
<span class="a t" style="left:1259.10px;top:482.58px;font-size:10.85px;line-height:15px;color:#1d2b4c;-webkit-text-stroke:0.22px #1d2b4c;">5:00 PM</span>
<span class="a t" style="left:1324.70px;top:482.58px;font-size:10.85px;line-height:15px;color:#1d2b4c;-webkit-text-stroke:0.22px #1d2b4c;">2352</span>
<span class="a t" style="left:1405.40px;top:482.58px;font-size:11.00px;line-height:15px;color:#1d2b4c;width:57.20px;overflow:hidden;-webkit-text-stroke:0.22px #1d2b4c;">Beverly Nich</span>
<div class="a " style="left:210.20px;top:512.07px;width:12.40px;height:12.40px;background:#fff;border:1px solid #f0f0f1;box-sizing:border-box;border-radius:2.5px;"></div>
<div class="a " style="left:241.10px;top:506.76px;width:23.10px;height:23.10px;background:#f4f4f4;border:1px solid #e3e4e5;box-sizing:border-box;border-radius:3px;"></div>
<svg class="a" style="left:246.90px;top:512.37px;" width="11.60" height="11.60" viewBox="0 0 10 10"><path d="M0.600 9.600L1.300 7.500L7 1.800L8.400 3.200L2.700 8.900z" fill="#5a5a5a"/><path d="M7.500 1L8.100 0.400a0.700 0.700 0 0 1 1 0L9.800 1.100a0.700 0.700 0 0 1 0 1L9.200 2.700z" fill="#444"/></svg>
<span class="a t" style="left:290.40px;top:510.87px;font-size:10.90px;line-height:15px;color:#1d2b4c;letter-spacing:-0.020px;-webkit-text-stroke:0.22px #1d2b4c;">Default</span>
<span class="a t" style="left:345.40px;top:510.87px;font-size:10.85px;line-height:15px;color:#1d2b4c;-webkit-text-stroke:0.22px #1d2b4c;">2371</span>
<span class="a t" style="left:423.60px;top:510.87px;font-size:11.00px;line-height:15px;color:#1d2b4c;-webkit-text-stroke:0.22px #1d2b4c;">C</span>
<span class="a t" style="left:491.00px;top:510.87px;font-size:10.85px;line-height:15px;color:#1d2b4c;-webkit-text-stroke:0.22px #1d2b4c;">11/28/2025</span>
<span class="a t" style="left:580.90px;top:510.87px;font-size:11.00px;line-height:15px;color:#1d2b4c;-webkit-text-stroke:0.22px #1d2b4c;">Aautomation Test Event - Tasting Event (2352)</span>
<span class="a t" style="left:827.10px;top:510.87px;font-size:11.00px;line-height:15px;color:#1d2b4c;-webkit-text-stroke:0.22px #1d2b4c;">CONFIRMED - DEPOSIT PEND.</span>
<span class="a t" style="left:1007.20px;top:510.87px;font-size:10.85px;line-height:15px;color:#1d2b4c;-webkit-text-stroke:0.22px #1d2b4c;">5:00 AM</span>
<span class="a t" style="left:1066.00px;top:510.87px;font-size:11.00px;line-height:15px;color:#1d2b4c;-webkit-text-stroke:0.22px #1d2b4c;">RECEPTION - COCKTAIL BUFFET</span>
<span class="a t" style="left:1259.10px;top:510.87px;font-size:10.85px;line-height:15px;color:#1d2b4c;-webkit-text-stroke:0.22px #1d2b4c;">5:00 PM</span>
<span class="a t" style="left:1324.70px;top:510.87px;font-size:10.85px;line-height:15px;color:#1d2b4c;-webkit-text-stroke:0.22px #1d2b4c;">2352</span>
<span class="a t" style="left:1405.40px;top:510.87px;font-size:11.00px;line-height:15px;color:#1d2b4c;width:57.20px;overflow:hidden;-webkit-text-stroke:0.22px #1d2b4c;">Beverly Nich</span>
<div class="a " style="left:210.20px;top:540.35px;width:12.40px;height:12.40px;background:#fff;border:1px solid #f0f0f1;box-sizing:border-box;border-radius:2.5px;"></div>
<div class="a " style="left:241.10px;top:535.05px;width:23.10px;height:23.10px;background:#f4f4f4;border:1px solid #e3e4e5;box-sizing:border-box;border-radius:3px;"></div>
<svg class="a" style="left:246.90px;top:540.65px;" width="11.60" height="11.60" viewBox="0 0 10 10"><path d="M0.600 9.600L1.300 7.500L7 1.800L8.400 3.200L2.700 8.900z" fill="#5a5a5a"/><path d="M7.500 1L8.100 0.400a0.700 0.700 0 0 1 1 0L9.800 1.100a0.700 0.700 0 0 1 0 1L9.200 2.700z" fill="#444"/></svg>
<span class="a t" style="left:290.40px;top:539.15px;font-size:10.90px;line-height:15px;color:#1d2b4c;letter-spacing:-0.020px;-webkit-text-stroke:0.22px #1d2b4c;">Default</span>
<span class="a t" style="left:345.40px;top:539.15px;font-size:10.85px;line-height:15px;color:#1d2b4c;-webkit-text-stroke:0.22px #1d2b4c;">2372</span>
<span class="a t" style="left:423.60px;top:539.15px;font-size:11.00px;line-height:15px;color:#1d2b4c;-webkit-text-stroke:0.22px #1d2b4c;">C</span>
<span class="a t" style="left:491.00px;top:539.15px;font-size:10.85px;line-height:15px;color:#1d2b4c;-webkit-text-stroke:0.22px #1d2b4c;">11/28/2025</span>
<span class="a t" style="left:580.90px;top:539.15px;font-size:11.00px;line-height:15px;color:#1d2b4c;-webkit-text-stroke:0.22px #1d2b4c;">Aautomation Test Event - Tasting Event (2352)</span>
<span class="a t" style="left:827.10px;top:539.15px;font-size:11.00px;line-height:15px;color:#1d2b4c;-webkit-text-stroke:0.22px #1d2b4c;">CONFIRMED - DEPOSIT PEND.</span>
<span class="a t" style="left:1007.20px;top:539.15px;font-size:10.85px;line-height:15px;color:#1d2b4c;-webkit-text-stroke:0.22px #1d2b4c;">5:00 AM</span>
<span class="a t" style="left:1066.00px;top:539.15px;font-size:11.00px;line-height:15px;color:#1d2b4c;-webkit-text-stroke:0.22px #1d2b4c;">RECEPTION - COCKTAIL BUFFET</span>
<span class="a t" style="left:1259.10px;top:539.15px;font-size:10.85px;line-height:15px;color:#1d2b4c;-webkit-text-stroke:0.22px #1d2b4c;">5:00 PM</span>
<span class="a t" style="left:1324.70px;top:539.15px;font-size:10.85px;line-height:15px;color:#1d2b4c;-webkit-text-stroke:0.22px #1d2b4c;">2352</span>
<span class="a t" style="left:1405.40px;top:539.15px;font-size:11.00px;line-height:15px;color:#1d2b4c;width:57.20px;overflow:hidden;-webkit-text-stroke:0.22px #1d2b4c;">Beverly Nich</span>
<div class="a " style="left:210.20px;top:568.63px;width:12.40px;height:12.40px;background:#fff;border:1px solid #f0f0f1;box-sizing:border-box;border-radius:2.5px;"></div>
<div class="a " style="left:241.10px;top:563.33px;width:23.10px;height:23.10px;background:#f4f4f4;border:1px solid #e3e4e5;box-sizing:border-box;border-radius:3px;"></div>
<svg class="a" style="left:246.90px;top:568.93px;" width="11.60" height="11.60" viewBox="0 0 10 10"><path d="M0.600 9.600L1.300 7.500L7 1.800L8.400 3.200L2.700 8.900z" fill="#5a5a5a"/><path d="M7.500 1L8.100 0.400a0.700 0.700 0 0 1 1 0L9.800 1.100a0.700 0.700 0 0 1 0 1L9.200 2.700z" fill="#444"/></svg>
<span class="a t" style="left:290.40px;top:567.43px;font-size:10.90px;line-height:15px;color:#1d2b4c;letter-spacing:-0.020px;-webkit-text-stroke:0.22px #1d2b4c;">Default</span>
<span class="a t" style="left:345.40px;top:567.43px;font-size:10.85px;line-height:15px;color:#1d2b4c;-webkit-text-stroke:0.22px #1d2b4c;">2373</span>
<span class="a t" style="left:423.60px;top:567.43px;font-size:11.00px;line-height:15px;color:#1d2b4c;-webkit-text-stroke:0.22px #1d2b4c;">C</span>
<span class="a t" style="left:491.00px;top:567.43px;font-size:10.85px;line-height:15px;color:#1d2b4c;-webkit-text-stroke:0.22px #1d2b4c;">11/28/2025</span>
<span class="a t" style="left:580.90px;top:567.43px;font-size:11.00px;line-height:15px;color:#1d2b4c;-webkit-text-stroke:0.22px #1d2b4c;">Aautomation Test Event - Tasting Event (2352)</span>
<span class="a t" style="left:827.10px;top:567.43px;font-size:11.00px;line-height:15px;color:#1d2b4c;-webkit-text-stroke:0.22px #1d2b4c;">CONFIRMED - DEPOSIT PEND.</span>
<span class="a t" style="left:1007.20px;top:567.43px;font-size:10.85px;line-height:15px;color:#1d2b4c;-webkit-text-stroke:0.22px #1d2b4c;">5:00 AM</span>
<span class="a t" style="left:1066.00px;top:567.43px;font-size:11.00px;line-height:15px;color:#1d2b4c;-webkit-text-stroke:0.22px #1d2b4c;">RECEPTION - COCKTAIL BUFFET</span>
<span class="a t" style="left:1259.10px;top:567.43px;font-size:10.85px;line-height:15px;color:#1d2b4c;-webkit-text-stroke:0.22px #1d2b4c;">5:00 PM</span>
<span class="a t" style="left:1324.70px;top:567.43px;font-size:10.85px;line-height:15px;color:#1d2b4c;-webkit-text-stroke:0.22px #1d2b4c;">2352</span>
<span class="a t" style="left:1405.40px;top:567.43px;font-size:11.00px;line-height:15px;color:#1d2b4c;width:57.20px;overflow:hidden;-webkit-text-stroke:0.22px #1d2b4c;">Beverly Nich</span>
<div class="a " style="left:210.20px;top:596.92px;width:12.40px;height:12.40px;background:#fff;border:1px solid #f0f0f1;box-sizing:border-box;border-radius:2.5px;"></div>
<div class="a " style="left:241.10px;top:591.62px;width:23.10px;height:23.10px;background:#f4f4f4;border:1px solid #e3e4e5;box-sizing:border-box;border-radius:3px;"></div>
<svg class="a" style="left:246.90px;top:597.22px;" width="11.60" height="11.60" viewBox="0 0 10 10"><path d="M0.600 9.600L1.300 7.500L7 1.800L8.400 3.200L2.700 8.900z" fill="#5a5a5a"/><path d="M7.500 1L8.100 0.400a0.700 0.700 0 0 1 1 0L9.800 1.100a0.700 0.700 0 0 1 0 1L9.200 2.700z" fill="#444"/></svg>
<span class="a t" style="left:290.40px;top:595.72px;font-size:10.90px;line-height:15px;color:#1d2b4c;letter-spacing:-0.020px;-webkit-text-stroke:0.22px #1d2b4c;">Default</span>
<span class="a t" style="left:345.40px;top:595.72px;font-size:10.85px;line-height:15px;color:#1d2b4c;-webkit-text-stroke:0.22px #1d2b4c;">2374</span>
<span class="a t" style="left:423.60px;top:595.72px;font-size:11.00px;line-height:15px;color:#1d2b4c;-webkit-text-stroke:0.22px #1d2b4c;">C</span>
<span class="a t" style="left:491.00px;top:595.72px;font-size:10.85px;line-height:15px;color:#1d2b4c;-webkit-text-stroke:0.22px #1d2b4c;">11/28/2025</span>
<span class="a t" style="left:580.90px;top:595.72px;font-size:11.00px;line-height:15px;color:#1d2b4c;-webkit-text-stroke:0.22px #1d2b4c;">Aautomation Test Event - Tasting Event (2352)</span>
<span class="a t" style="left:827.10px;top:595.72px;font-size:11.00px;line-height:15px;color:#1d2b4c;-webkit-text-stroke:0.22px #1d2b4c;">CONFIRMED / BOOKED</span>
<span class="a t" style="left:1007.20px;top:595.72px;font-size:10.85px;line-height:15px;color:#1d2b4c;-webkit-text-stroke:0.22px #1d2b4c;">5:00 AM</span>
<span class="a t" style="left:1066.00px;top:595.72px;font-size:11.00px;line-height:15px;color:#1d2b4c;-webkit-text-stroke:0.22px #1d2b4c;">FULL SERVICE</span>
<span class="a t" style="left:1259.10px;top:595.72px;font-size:10.85px;line-height:15px;color:#1d2b4c;-webkit-text-stroke:0.22px #1d2b4c;">5:00 PM</span>
<span class="a t" style="left:1324.70px;top:595.72px;font-size:10.85px;line-height:15px;color:#1d2b4c;-webkit-text-stroke:0.22px #1d2b4c;">2352</span>
<span class="a t" style="left:1405.40px;top:595.72px;font-size:11.00px;line-height:15px;color:#1d2b4c;width:57.20px;overflow:hidden;-webkit-text-stroke:0.22px #1d2b4c;">Beverly Nich</span>
<div class="a " style="left:210.20px;top:625.21px;width:12.40px;height:12.40px;background:#fff;border:1px solid #f0f0f1;box-sizing:border-box;border-radius:2.5px;"></div>
<div class="a " style="left:241.10px;top:619.90px;width:23.10px;height:23.10px;background:#f4f4f4;border:1px solid #e3e4e5;box-sizing:border-box;border-radius:3px;"></div>
<svg class="a" style="left:246.90px;top:625.50px;" width="11.60" height="11.60" viewBox="0 0 10 10"><path d="M0.600 9.600L1.300 7.500L7 1.800L8.400 3.200L2.700 8.900z" fill="#5a5a5a"/><path d="M7.500 1L8.100 0.400a0.700 0.700 0 0 1 1 0L9.800 1.100a0.700 0.700 0 0 1 0 1L9.200 2.700z" fill="#444"/></svg>
<span class="a t" style="left:290.40px;top:624.00px;font-size:10.90px;line-height:15px;color:#1d2b4c;letter-spacing:-0.020px;-webkit-text-stroke:0.22px #1d2b4c;">Default</span>
<span class="a t" style="left:345.40px;top:624.00px;font-size:10.85px;line-height:15px;color:#1d2b4c;-webkit-text-stroke:0.22px #1d2b4c;">2375</span>
<span class="a t" style="left:423.60px;top:624.00px;font-size:11.00px;line-height:15px;color:#1d2b4c;-webkit-text-stroke:0.22px #1d2b4c;">C</span>
<span class="a t" style="left:491.00px;top:624.00px;font-size:10.85px;line-height:15px;color:#1d2b4c;-webkit-text-stroke:0.22px #1d2b4c;">11/28/2025</span>
<span class="a t" style="left:580.90px;top:624.00px;font-size:11.00px;line-height:15px;color:#1d2b4c;-webkit-text-stroke:0.22px #1d2b4c;">Aautomation Test Event - Tasting Event (2352)</span>
<span class="a t" style="left:827.10px;top:624.00px;font-size:11.00px;line-height:15px;color:#1d2b4c;-webkit-text-stroke:0.22px #1d2b4c;">CONFIRMED - DEPOSIT PEND.</span>
<span class="a t" style="left:1007.20px;top:624.00px;font-size:10.85px;line-height:15px;color:#1d2b4c;-webkit-text-stroke:0.22px #1d2b4c;">5:00 AM</span>
<span class="a t" style="left:1066.00px;top:624.00px;font-size:11.00px;line-height:15px;color:#1d2b4c;-webkit-text-stroke:0.22px #1d2b4c;">WEDDING - LUNCH</span>
<span class="a t" style="left:1259.10px;top:624.00px;font-size:10.85px;line-height:15px;color:#1d2b4c;-webkit-text-stroke:0.22px #1d2b4c;">5:00 PM</span>
<span class="a t" style="left:1324.70px;top:624.00px;font-size:10.85px;line-height:15px;color:#1d2b4c;-webkit-text-stroke:0.22px #1d2b4c;">2352</span>
<span class="a t" style="left:1405.40px;top:624.00px;font-size:11.00px;line-height:15px;color:#1d2b4c;width:57.20px;overflow:hidden;-webkit-text-stroke:0.22px #1d2b4c;">Beverly Nich</span>
<div class="a " style="left:210.20px;top:653.49px;width:12.40px;height:12.40px;background:#fff;border:1px solid #f0f0f1;box-sizing:border-box;border-radius:2.5px;"></div>
<div class="a " style="left:241.10px;top:648.19px;width:23.10px;height:23.10px;background:#f4f4f4;border:1px solid #e3e4e5;box-sizing:border-box;border-radius:3px;"></div>
<svg class="a" style="left:246.90px;top:653.79px;" width="11.60" height="11.60" viewBox="0 0 10 10"><path d="M0.600 9.600L1.300 7.500L7 1.800L8.400 3.200L2.700 8.900z" fill="#5a5a5a"/><path d="M7.500 1L8.100 0.400a0.700 0.700 0 0 1 1 0L9.800 1.100a0.700 0.700 0 0 1 0 1L9.200 2.700z" fill="#444"/></svg>
<div class="a " style="left:1462.90px;top:250.00px;width:11.40px;height:416.00px;background:#fbfbfb;"></div>
<svg class="a" style="left:1464.60px;top:254.00px;" width="7.60" height="4.80" viewBox="0 0 10 6"><path d="M5 0L10 6H0z" fill="#8c8c8c"/></svg>
<div class="a " style="left:1465.50px;top:262.50px;width:5.90px;height:297.00px;background:#8a8a8a;border-radius:3px;"></div>
<svg class="a" style="left:1464.60px;top:643.60px;" width="7.60" height="4.80" viewBox="0 0 10 6"><path d="M0 0H10L5 6z" fill="#8c8c8c"/></svg>
<div class="a " style="left:200.40px;top:651.00px;width:1273.90px;height:15.00px;background:#fbfbfb;"></div>
<svg class="a" style="left:204.00px;top:654.40px;" width="5.40" height="7.40" viewBox="0 0 6 10"><path d="M6 0V10L0 5z" fill="#8c8c8c"/></svg>
<div class="a " style="left:214.80px;top:655.00px;width:475.00px;height:6.40px;background:#8a8a8a;border-radius:3.2px;"></div>
<svg class="a" style="left:1453.60px;top:653.40px;" width="5.40" height="7.40" viewBox="0 0 6 10"><path d="M0 0V10L6 5z" fill="#8c8c8c"/></svg>
<svg class="a" style="left:123.70px;top:12.90px;" width="13.60" height="15.30" viewBox="0 0 13.6 15.3"><rect x="0.650" y="2.300" width="12.300" height="12.300" rx="1.700" fill="none" stroke="#fff" stroke-width="1.250"/><path d="M3.700 0V3M9.900 0V3" stroke="#fff" stroke-width="1.300" fill="none"/><path d="M0.700 5.500H12.900" stroke="#fff" stroke-width="1" fill="none"/><rect x="3.100" y="7.700" width="1.700" height="1.700" fill="#f07fdc"/><rect x="5.950" y="7.700" width="1.700" height="1.700" fill="#fff"/><rect x="8.800" y="7.700" width="1.700" height="1.700" fill="#7fe9f7"/><rect x="3.100" y="10.500" width="1.700" height="1.700" fill="#f07fdc"/><rect x="5.950" y="10.500" width="1.700" height="1.700" fill="#fff"/><rect x="8.800" y="10.500" width="1.700" height="1.700" fill="#7fe9f7"/></svg>
<svg class="a" style="left:142.00px;top:14.00px;" width="19.00" height="14.20" viewBox="0 0 19 14.2"><path d="M2.6 11.4H1.9a1.2 1.2 0 0 1-1.2-1.2V1.9A1.2 1.2 0 0 1 1.9 0.7H10a1.2 1.2 0 0 1 1.2 1.2V11.4H6.4M11.2 3.4H14.2L17.6 7V10.2a1.2 1.2 0 0 1-1.2 1.2H16.2M11.2 11.4H12.4M13 5.2H15.6M13 7.2H17.6" fill="none" stroke="#fff" stroke-width="1.3" stroke-linejoin="round"/><circle cx="4.5" cy="11.6" r="1.9" fill="none" stroke="#fff" stroke-width="1.2"/><circle cx="14.3" cy="11.6" r="1.9" fill="none" stroke="#fff" stroke-width="1.2"/></svg>
<svg class="a" style="left:166.00px;top:12.90px;" width="17.40" height="15.30" viewBox="0 0 17.4 15.3"><path d="M0 0H17.4V1.6H16.2V13.7H17.4V15.3H0V13.7H1.2V1.6H0z" fill="#fff"/><g fill="#01102c"><rect x="4" y="3.2" width="1.8" height="1.8"/><rect x="7.8" y="3.2" width="1.8" height="1.8"/><rect x="11.6" y="3.2" width="1.8" height="1.8"/><rect x="4" y="6.4" width="1.8" height="1.8"/><rect x="7.8" y="6.4" width="1.8" height="1.8"/><rect x="11.6" y="6.4" width="1.8" height="1.8"/><path d="M6.2 11.4a2.5 2.3 0 0 1 5 0z"/><rect x="8.1" y="12.6" width="1.2" height="2.7"/></g></svg>
<svg class="a" style="left:188.20px;top:12.70px;" width="15.80" height="15.40" viewBox="0 0 16 16"><path d="M15.4 1.3L12.3 0.1a0.8 0.8 0 0 0-0.9 0.4L10 3.6a0.8 0.8 0 0 0 0.2 0.9l1.7 1.4A11.6 11.6 0 0 1 6 11.9L4.600 10.2a0.800 0.800 0 0 0-0.900-0.200L0.500 11.400a0.800 0.800 0 0 0-0.400 0.900L1.300 15.400A0.800 0.800 0 0 0 2 16 14 14 0 0 0 16 2a0.800 0.800 0 0 0-0.600-0.700z" fill="#fff"/></svg>
<svg class="a" style="left:1336.00px;top:16.00px;" width="12.40" height="9.40" viewBox="0 0 12.4 9.4"><path d="M4.2 0.8H2.2A1.4 1.4 0 0 0 0.8 2.2V7.2A1.4 1.4 0 0 0 2.2 8.600H4.2" fill="none" stroke="#fff" stroke-width="1.6" stroke-linecap="round"/><path d="M3.6 3.2H7.2V0.600L12.200 4.700L7.200 8.800V6.200H3.6z" fill="#fff"/></svg>
<svg class="a" style="left:1359.50px;top:16.40px;" width="12.50" height="9.00" viewBox="0 0 12.5 9"><path d="M0.7 1.500V7.400A0.900 0.900 0 0 0 1.600 8.300H10.900A0.900 0.900 0 0 0 11.800 7.400V2.900A0.900 0.900 0 0 0 10.900 2H6.200L4.900 0.700H1.600A0.900 0.900 0 0 0 0.700 1.500z" fill="none" stroke="#fff" stroke-width="1.3" stroke-linejoin="round"/></svg>
<svg class="a" style="left:1383.20px;top:15.20px;" width="11.50" height="11.50" viewBox="0 0 11.5 11.5"><path d="M10.69 4.97L10.69 6.53L9.53 6.72L9.11 7.74L9.80 8.69L8.69 9.80L7.74 9.11L6.72 9.53L6.53 10.69L4.97 10.69L4.78 9.53L3.76 9.11L2.81 9.80L1.70 8.69L2.39 7.74L1.97 6.72L0.81 6.53L0.81 4.97L1.97 4.78L2.39 3.76L1.70 2.81L2.81 1.70L3.76 2.39L4.78 1.97L4.97 0.81L6.53 0.81L6.72 1.97L7.74 2.39L8.69 1.70L9.80 2.81L9.11 3.76L9.53 4.78z" fill="none" stroke="#fff" stroke-width="1.45" stroke-linejoin="round"/><circle cx="5.75" cy="5.75" r="1.6" fill="none" stroke="#fff" stroke-width="1.4"/></svg>
<svg class="a" style="left:1406.20px;top:15.00px;" width="13.60" height="11.80" viewBox="0 0 13.6 11.8"><path d="M12.200 0.200L5.600 2.900H1.800A1.600 1.600 0 0 0 0.200 4.500V5.900A1.600 1.600 0 0 0 1.800 7.500H2.100L3 11.100A0.700 0.700 0 0 0 3.700 11.600H5.200A0.700 0.700 0 0 0 5.900 10.700L5.300 7.500H5.600L12.200 10.200A0.500 0.500 0 0 0 12.900 9.700V0.700A0.500 0.500 0 0 0 12.200 0.200zM11.300 2.500V7.900L7 6.100V4.300z" fill="#fff" fill-rule="evenodd"/></svg>
<svg class="a" style="left:1430.60px;top:14.70px;" width="9.40" height="12.00" viewBox="0 0 9.4 12"><path d="M0 0.800A0.800 0.800 0 0 1 0.800 0H8.600A0.800 0.800 0 0 1 9.400 0.800V12L4.700 9L0 12z" fill="#fff"/></svg>
<svg class="a" style="left:1460.90px;top:11.30px;" width="18.40" height="18.40" viewBox="0 0 18.4 18.4"><circle cx="9.200" cy="9.200" r="9.200" fill="#fff"/><circle cx="9.200" cy="9.200" r="6.700" fill="#fff" stroke="#0b0b12" stroke-width="1.800"/><text x="9.200" y="13.300" font-size="11.800" font-weight="700" text-anchor="middle" fill="#0b0b12" font-family="Liberation Sans,sans-serif">?</text></svg>
<svg class="a" style="left:15.40px;top:101.40px;" width="11.60" height="10.60" viewBox="0 0 11.6 10.6"><circle cx="4.700" cy="4.600" r="3.950" fill="none" stroke="#fff" stroke-width="1.25"/><path d="M7.700 7.500L11 10.100" stroke="#fff" stroke-width="1.3" stroke-linecap="round"/></svg>
<div class="a " style="left:15.70px;top:130.10px;width:10.20px;height:1.89px;background:#fff;border-radius:0.4px;"></div>
<div class="a " style="left:15.70px;top:133.55px;width:10.20px;height:1.89px;background:#fff;border-radius:0.4px;"></div>
<div class="a " style="left:15.70px;top:137.01px;width:10.20px;height:1.89px;background:#fff;border-radius:0.4px;"></div>
<svg class="a" style="left:15.70px;top:156.90px;" width="13.60" height="11.00" viewBox="0 0 13.6 11"><path d="M1.400 5.400V1.400A0.800 0.800 0 0 1 2.200 0.600H11.400A0.800 0.800 0 0 1 12.200 1.400V5.400" fill="none" stroke="#fff" stroke-width="1.2"/><g fill="none" stroke="#fff" stroke-width="0.95"><circle cx="2.700" cy="6.700" r="1.250"/><circle cx="6.800" cy="6.700" r="1.250"/><circle cx="10.900" cy="6.700" r="1.250"/></g><path d="M0.500 10.900A2.200 2.300 0 0 1 4.900 10.900zM4.600 10.900A2.200 2.300 0 0 1 9 10.900zM8.700 10.900A2.200 2.300 0 0 1 13.100 10.900z" fill="#fff"/></svg>
<div class="a " style="left:27.40px;top:186.40px;width:9.80px;height:1.81px;background:#fff;border-radius:0.4px;"></div>
<div class="a " style="left:27.40px;top:189.70px;width:9.80px;height:1.81px;background:#fff;border-radius:0.4px;"></div>
<div class="a " style="left:27.40px;top:192.99px;width:9.80px;height:1.81px;background:#fff;border-radius:0.4px;"></div>
<span class="a t" style="left:38.90px;top:211.30px;font-size:12.60px;line-height:14px;color:#fff;font-weight:700;">$</span>
<div class="a " style="left:38.70px;top:241.80px;width:10.30px;height:1.94px;background:#fff;border-radius:0.4px;"></div>
<div class="a " style="left:38.70px;top:245.33px;width:10.30px;height:1.94px;background:#fff;border-radius:0.4px;"></div>
<div class="a " style="left:38.70px;top:248.87px;width:10.30px;height:1.94px;background:#fff;border-radius:0.4px;"></div>
<svg class="a" style="left:38.70px;top:268.90px;" width="11.50" height="11.00" viewBox="0 0 11.5 11"><path d="M2.800 3.400V0.600H7.600L8.700 1.700V3.400" fill="none" stroke="#fff" stroke-width="1.1" stroke-linejoin="round"/><rect x="0.6" y="3.6" width="10.3" height="4.600" rx="1.2" fill="none" stroke="#fff" stroke-width="1.2"/><rect x="2.800" y="6.600" width="5.900" height="3.800" fill="#01102c" stroke="#fff" stroke-width="1.1"/></svg>
<div class="a " style="left:26.90px;top:297.30px;width:10.70px;height:2.00px;background:#fff;border-radius:0.4px;"></div>
<div class="a " style="left:26.90px;top:300.95px;width:10.70px;height:2.00px;background:#fff;border-radius:0.4px;"></div>
<div class="a " style="left:26.90px;top:304.60px;width:10.70px;height:2.00px;background:#fff;border-radius:0.4px;"></div>
<div class="a " style="left:26.90px;top:325.20px;width:10.70px;height:2.00px;background:#fff;border-radius:0.4px;"></div>
<div class="a " style="left:26.90px;top:328.85px;width:10.70px;height:2.00px;background:#fff;border-radius:0.4px;"></div>
<div class="a " style="left:26.90px;top:332.50px;width:10.70px;height:2.00px;background:#fff;border-radius:0.4px;"></div>
<svg class="a" style="left:15.90px;top:352.80px;" width="11.00" height="11.00" viewBox="0 0 11 11"><circle cx="5.5" cy="3.700" r="3.700" fill="#fff"/><text x="5.5" y="6" font-size="6" font-weight="700" text-anchor="middle" fill="#01102c" font-family="Liberation Sans,sans-serif">$</text><path d="M0 7.200H2.200L3 8.400H8L8.800 7.200H11V10.200A0.800 0.800 0 0 1 10.200 11H0.800A0.800 0.800 0 0 1 0 10.200z" fill="#fff"/></svg>
<svg class="a" style="left:15.90px;top:380.20px;" width="13.40" height="11.00" viewBox="0 0 13.4 11"><path d="M0.300 7.800V4.500A0.800 0.800 0 0 1 1.100 3.700H2.200V1A0.800 0.800 0 0 1 3 0.200H6.100A0.800 0.800 0 0 1 6.800 0.700L8.600 4.800V8.200H7.900A2 2 0 0 0 4 8.200H3.900A2 2 0 0 0 0.300 7.800zM3.700 1.700V3.700H6.300L5.500 1.700z" fill="#fff" fill-rule="evenodd"/><circle cx="2.100" cy="9.100" r="1.500" fill="#fff"/><circle cx="6" cy="9.100" r="1.500" fill="#fff"/><path d="M10.300 0.500V9.800H13.200" fill="none" stroke="#9aa3b5" stroke-width="1.100"/></svg>
<svg class="a" style="left:15.90px;top:408.60px;" width="11.00" height="11.40" viewBox="0 0 11 11.4"><rect x="0.650" y="0.650" width="9.700" height="10.100" rx="1" fill="none" stroke="#fff" stroke-width="1.3"/><path d="M0.650 5.700H10.350" stroke="#fff" stroke-width="1.2"/><path d="M3.800 3.100H7.200M3.800 8.200H7.200" stroke="#fff" stroke-width="1.200"/></svg>
<svg class="a" style="left:15.90px;top:436.90px;" width="11.00" height="9.80" viewBox="0 0 11 9.8"><path d="M3.400 2.800V1.300A0.700 0.700 0 0 1 4.100 0.600H6.900A0.700 0.700 0 0 1 7.600 1.300V2.800" fill="none" stroke="#fff" stroke-width="1.2"/><path d="M0.600 3.900A1.100 1.100 0 0 1 1.700 2.800H9.300A1.100 1.100 0 0 1 10.400 3.900V8.200A1 1 0 0 1 9.400 9.200H1.600A1 1 0 0 1 0.600 8.200z" fill="none" stroke="#fff" stroke-width="1.200"/><path d="M0.600 6H10.400M3.200 5V7M7.800 5V7" stroke="#fff" stroke-width="1.100"/></svg>
<svg class="a" style="left:204.00px;top:60.00px;" width="32.00" height="21.00" viewBox="0 0 32 21"><circle cx="8.400" cy="5.900" r="4.700" fill="#fff"/><path d="M0.500 19.500V16.600A4 4 0 0 1 4.500 12.600H12.300A4 4 0 0 1 16.300 16.600V19.500z" fill="#fff"/><path d="M20.300 4.900H31M20.300 9.300H31M20.300 13.500H31" stroke="#5f879f" stroke-width="1.600"/></svg>
<svg class="a" style="left:381.50px;top:123.20px;" width="11.00" height="11.50" viewBox="0 0 11 11.500"><rect x="0.600" y="1.600" width="9.800" height="9.300" rx="0.800" fill="none" stroke="#444" stroke-width="1.050"/><path d="M0.600 4.300H10.400M3 0V2.400M8 0V2.400" stroke="#444" stroke-width="1.050"/><rect x="6" y="6.700" width="2.700" height="2.700" fill="#3c3c3c"/></svg>
<svg class="a" style="left:596.30px;top:123.20px;" width="11.00" height="11.50" viewBox="0 0 11 11.500"><rect x="0.600" y="1.600" width="9.800" height="9.300" rx="0.800" fill="none" stroke="#444" stroke-width="1.050"/><path d="M0.600 4.300H10.400M3 0V2.400M8 0V2.400" stroke="#444" stroke-width="1.050"/><rect x="6" y="6.700" width="2.700" height="2.700" fill="#3c3c3c"/></svg>
<svg class="a" style="left:649.00px;top:123.40px;" width="11.80" height="11.80" viewBox="0 0 11.4 11.4"><path d="M6 1.900A4.400 4.400 0 1 0 10.400 6.300" fill="none" stroke="#333" stroke-width="1.500"/><path d="M5.600 0L8.700 2L5.600 4.200z" fill="#333"/></svg>
<svg class="a" style="left:1208.00px;top:163.00px;" width="11.40" height="11.40" viewBox="0 0 11.4 11.4"><path d="M6 1.900A4.400 4.400 0 1 0 10.400 6.300" fill="none" stroke="#333" stroke-width="1.500"/><path d="M5.600 0L8.700 2L5.600 4.200z" fill="#333"/></svg>
<svg class="a" style="left:1298.00px;top:162.80px;" width="11.00" height="11.00" viewBox="0 0 11 11"><circle cx="4.200" cy="4.200" r="3.300" fill="none" stroke="#444" stroke-width="1.300"/><path d="M6.700 6.700L10.300 10.300" stroke="#444" stroke-width="1.600" stroke-linecap="round"/></svg>
<svg class="a" style="left:1145.90px;top:9.10px;" width="183.40" height="18.80" viewBox="0 0 183.4 18.8"><rect x="0.00" y="0.00" width="6.16" height="6.32" fill="#050530"/><rect x="6.11" y="0.00" width="6.16" height="6.32" fill="#1a2a55"/><rect x="12.23" y="0.00" width="6.16" height="6.32" fill="#030a2a"/><rect x="18.34" y="0.00" width="6.16" height="6.32" fill="#0a1a45"/><rect x="24.45" y="0.00" width="6.16" height="6.32" fill="#1c2b58"/><rect x="30.57" y="0.00" width="6.16" height="6.32" fill="#152450"/><rect x="36.68" y="0.00" width="6.16" height="6.32" fill="#152450"/><rect x="42.79" y="0.00" width="6.16" height="6.32" fill="#000005"/><rect x="48.91" y="0.00" width="6.16" height="6.32" fill="#08183f"/><rect x="55.02" y="0.00" width="6.16" height="6.32" fill="#061439"/><rect x="61.13" y="0.00" width="6.16" height="6.32" fill="#000008"/><rect x="67.25" y="0.00" width="6.16" height="6.32" fill="#000008"/><rect x="73.36" y="0.00" width="6.16" height="6.32" fill="#2c3b66"/><rect x="79.47" y="0.00" width="6.16" height="6.32" fill="#04103a"/><rect x="85.59" y="0.00" width="6.16" height="6.32" fill="#00000a"/><rect x="91.70" y="0.00" width="6.16" height="6.32" fill="#04062e"/><rect x="97.81" y="0.00" width="6.16" height="6.32" fill="#05103a"/><rect x="103.93" y="0.00" width="6.16" height="6.32" fill="#030830"/><rect x="110.04" y="0.00" width="6.16" height="6.32" fill="#13234d"/><rect x="116.15" y="0.00" width="6.16" height="6.32" fill="#02062a"/><rect x="122.27" y="0.00" width="6.16" height="6.32" fill="#0a1a42"/><rect x="128.38" y="0.00" width="6.16" height="6.32" fill="#08163e"/><rect x="134.49" y="0.00" width="6.16" height="6.32" fill="#050e35"/><rect x="140.61" y="0.00" width="6.16" height="6.32" fill="#04103a"/><rect x="146.72" y="0.00" width="6.16" height="6.32" fill="#060f38"/><rect x="152.83" y="0.00" width="6.16" height="6.32" fill="#010520"/><rect x="158.95" y="0.00" width="6.16" height="6.32" fill="#06143c"/><rect x="165.06" y="0.00" width="6.16" height="6.32" fill="#02062a"/><rect x="171.17" y="0.00" width="6.16" height="6.32" fill="#030830"/><rect x="177.29" y="0.00" width="6.16" height="6.32" fill="#0c1c45"/><rect x="0.00" y="6.27" width="6.16" height="6.32" fill="#1f2d55"/><rect x="6.11" y="6.27" width="6.16" height="6.32" fill="#06143a"/><rect x="12.23" y="6.27" width="6.16" height="6.32" fill="#0a1a40"/><rect x="18.34" y="6.27" width="6.16" height="6.32" fill="#06123a"/><rect x="24.45" y="6.27" width="6.16" height="6.32" fill="#1c2b58"/><rect x="30.57" y="6.27" width="6.16" height="6.32" fill="#0c1440"/><rect x="36.68" y="6.27" width="6.16" height="6.32" fill="#030525"/><rect x="42.79" y="6.27" width="6.16" height="6.32" fill="#000005"/><rect x="48.91" y="6.27" width="6.16" height="6.32" fill="#3a4770"/><rect x="55.02" y="6.27" width="6.16" height="6.32" fill="#0a1a40"/><rect x="61.13" y="6.27" width="6.16" height="6.32" fill="#0c1a40"/><rect x="67.25" y="6.27" width="6.16" height="6.32" fill="#030530"/><rect x="73.36" y="6.27" width="6.16" height="6.32" fill="#030530"/><rect x="79.47" y="6.27" width="6.16" height="6.32" fill="#08183f"/><rect x="85.59" y="6.27" width="6.16" height="6.32" fill="#040c35"/><rect x="91.70" y="6.27" width="6.16" height="6.32" fill="#06123a"/><rect x="97.81" y="6.27" width="6.16" height="6.32" fill="#05103a"/><rect x="103.93" y="6.27" width="6.16" height="6.32" fill="#000005"/><rect x="110.04" y="6.27" width="6.16" height="6.32" fill="#020520"/><rect x="116.15" y="6.27" width="6.16" height="6.32" fill="#02051f"/><rect x="122.27" y="6.27" width="6.16" height="6.32" fill="#0c1c45"/><rect x="128.38" y="6.27" width="6.16" height="6.32" fill="#000005"/><rect x="134.49" y="6.27" width="6.16" height="6.32" fill="#02051f"/><rect x="140.61" y="6.27" width="6.16" height="6.32" fill="#122250"/><rect x="146.72" y="6.27" width="6.16" height="6.32" fill="#0e1e48"/><rect x="152.83" y="6.27" width="6.16" height="6.32" fill="#0a1a42"/><rect x="158.95" y="6.27" width="6.16" height="6.32" fill="#000005"/><rect x="165.06" y="6.27" width="6.16" height="6.32" fill="#0c1c45"/><rect x="171.17" y="6.27" width="6.16" height="6.32" fill="#020525"/><rect x="177.29" y="6.27" width="6.16" height="6.32" fill="#020525"/><rect x="0.00" y="12.53" width="6.16" height="6.32" fill="#000005"/><rect x="6.11" y="12.53" width="6.16" height="6.32" fill="#0e1e45"/><rect x="12.23" y="12.53" width="6.16" height="6.32" fill="#122248"/><rect x="18.34" y="12.53" width="6.16" height="6.32" fill="#0c1c42"/><rect x="24.45" y="12.53" width="6.16" height="6.32" fill="#2a3a62"/><rect x="30.57" y="12.53" width="6.16" height="6.32" fill="#33436c"/><rect x="36.68" y="12.53" width="6.16" height="6.32" fill="#0c1c45"/><rect x="42.79" y="12.53" width="6.16" height="6.32" fill="#040830"/><rect x="48.91" y="12.53" width="6.16" height="6.32" fill="#0a1a45"/><rect x="55.02" y="12.53" width="6.16" height="6.32" fill="#040a32"/><rect x="61.13" y="12.53" width="6.16" height="6.32" fill="#0a1842"/><rect x="67.25" y="12.53" width="6.16" height="6.32" fill="#0e1e4a"/><rect x="73.36" y="12.53" width="6.16" height="6.32" fill="#000005"/><rect x="79.47" y="12.53" width="6.16" height="6.32" fill="#040a32"/><rect x="85.59" y="12.53" width="6.16" height="6.32" fill="#1a2548"/><rect x="91.70" y="12.53" width="6.16" height="6.32" fill="#06123a"/><rect x="97.81" y="12.53" width="6.16" height="6.32" fill="#15264e"/><rect x="103.93" y="12.53" width="6.16" height="6.32" fill="#030830"/><rect x="110.04" y="12.53" width="6.16" height="6.32" fill="#030830"/><rect x="116.15" y="12.53" width="6.16" height="6.32" fill="#3a4770"/><rect x="122.27" y="12.53" width="6.16" height="6.32" fill="#0c1c45"/><rect x="128.38" y="12.53" width="6.16" height="6.32" fill="#05103a"/><rect x="134.49" y="12.53" width="6.16" height="6.32" fill="#030830"/><rect x="140.61" y="12.53" width="6.16" height="6.32" fill="#06143c"/><rect x="146.72" y="12.53" width="6.16" height="6.32" fill="#14224a"/><rect x="152.83" y="12.53" width="6.16" height="6.32" fill="#06143c"/><rect x="158.95" y="12.53" width="6.16" height="6.32" fill="#030a30"/><rect x="165.06" y="12.53" width="6.16" height="6.32" fill="#000008"/><rect x="171.17" y="12.53" width="6.16" height="6.32" fill="#202e58"/><rect x="177.29" y="12.53" width="6.16" height="6.32" fill="#202e58"/></svg>
<div class="a " style="left:598.90px;top:454.80px;width:38.00px;height:38.00px;background:rgba(255,255,60,0.66);border-radius:50%;"></div>
<svg class="a" style="left:617.20px;top:473.60px;" width="10.00" height="15.00" viewBox="0 0 10 15"><path d="M0.5 0.5V11.6L3.2 9.2L5.2 13.8L7 13L5 8.6H8.6z" fill="rgba(255,255,255,.85)" stroke="#777" stroke-width="0.9" stroke-linejoin="round"/></svg>
<div class="a " style="left:0.00px;top:550.00px;width:1496.00px;height:116.00px;background:linear-gradient(to bottom,rgba(0,0,0,0.00) 0.0%,rgba(0,0,0,0.06) 22.4%,rgba(0,0,0,0.15) 39.7%,rgba(0,0,0,0.29) 55.2%,rgba(0,0,0,0.42) 70.7%,rgba(0,0,0,0.52) 81.9%,rgba(0,0,0,0.61) 90.5%,rgba(0,0,0,0.74) 100.0%);"></div>
<div class="a " style="left:0.00px;top:666.00px;width:1496.00px;height:4.00px;background:#101010;"></div>
<div class="a " style="left:0.00px;top:0.00px;width:1496.00px;height:2.00px;background:#101010;"></div>
</body></html>
